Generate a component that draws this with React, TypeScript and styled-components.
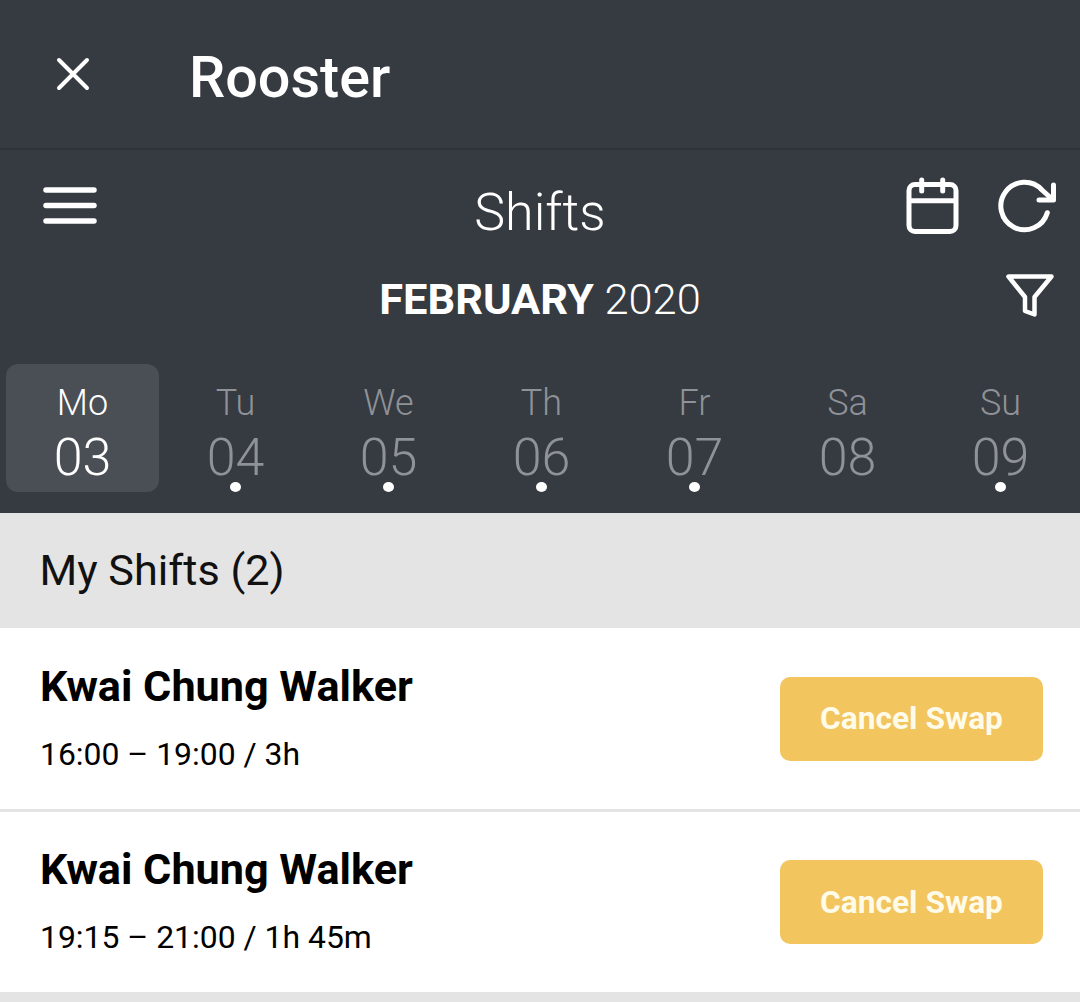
import { createGlobalStyle, styled } from "styled-components";

const GlobalStyle = createGlobalStyle`
  html, body {
    margin: 0;
    padding: 0;
    background: #e4e4e4;
    font-family: Roboto, "Liberation Sans", sans-serif;
  }
`;

const Page = styled.div`
  width: 1080px;
  height: 1002px;
  overflow: hidden;
  display: flex;
  flex-direction: column;
`;

const TopBar = styled.header`
  height: 148px;
  border-bottom: 2px solid #30343a;
  background: #363a41;
  display: flex;
  align-items: center;
  padding-left: 55px;
  gap: 98px;
`;

const Title = styled.h1`
  margin: 6px 0 0;
  font-size: 57.5px;
  font-weight: 500;
  color: #fff;
`;

const Panel = styled.section`
  height: 363px;
  box-sizing: border-box;
  padding-top: 27px;
  background: #363a41;
  color: #fff;
`;

const Toolbar = styled.div`
  height: 60px;
  padding: 0 24px;
  display: grid;
  grid-template-columns: 1fr auto 1fr;
`;

const MenuSlot = styled.div`
  padding-left: 19px;
`;

const ScreenName = styled.h2`
  margin: 0;
  font-size: 52px;
  line-height: 72px;
  font-weight: 300;
`;

const ToolbarActions = styled.div`
  display: flex;
  justify-content: flex-end;
  gap: 38px;
`;

const MonthRow = styled.div`
  height: 52px;
  margin-top: 36px;
  padding: 0 25px;
  display: grid;
  grid-template-columns: 1fr auto 1fr;
`;

const MonthLabel = styled.div`
  font-size: 43.4px;
  line-height: 54px;
  font-weight: 300;

  strong {
    font-weight: 700;
  }
`;

const FilterSlot = styled.div`
  display: flex;
  justify-content: flex-end;
`;

const Days = styled.div`
  margin-top: 39px;
  padding-left: 6px;
  display: grid;
  grid-template-columns: repeat(7, 153px);
`;

const Day = styled.div<{ $active?: boolean }>`
  position: relative;
  height: 128px;
  border-radius: 12px;
  background: ${(p) => (p.$active ? "#4a4e55" : "transparent")};
  color: ${(p) => (p.$active ? "#fff" : "#8f9297")};
  display: flex;
  flex-direction: column;
  align-items: center;
  font-weight: 300;
`;

const DayName = styled.span`
  margin-top: 17px;
  font-size: 36px;
  line-height: 44px;
`;

const DayNumber = styled.span`
  margin-top: 2px;
  font-size: 52px;
  line-height: 62px;
`;

const Dot = styled.span`
  position: absolute;
  left: 50%;
  top: 118px;
  width: 11px;
  height: 10px;
  margin-left: -5.5px;
  border-radius: 50%;
  background: #fff;
`;

const SectionHeader = styled.div`
  height: 115px;
  padding-left: 39.5px;
  display: flex;
  align-items: center;
  background: #e4e4e4;
  color: #111;
  font-size: 43.2px;
`;

const ShiftRow = styled.div<{ $height: number }>`
  height: ${(p) => p.$height}px;
  padding: 0 37px 0 40px;
  display: flex;
  justify-content: space-between;
  align-items: center;
  background: #fff;
`;

const ShiftInfo = styled.div`
  display: flex;
  flex-direction: column;
  gap: 23px;
  margin-bottom: 3px;
  color: #000;
`;

const ShiftName = styled.div`
  font-size: 43.2px;
  line-height: 50px;
  font-weight: 700;
`;

const ShiftTime = styled.div`
  font-size: 31.9px;
  line-height: 38px;
`;

const SwapButton = styled.button`
  width: 263px;
  height: 84px;
  border: none;
  border-radius: 10px;
  background: #f2c55f;
  color: #fffbe9;
  font-family: inherit;
  font-size: 31.7px;
  font-weight: 700;
`;

const Divider = styled.div`
  height: 3px;
  background: #e4e4e4;
`;

const CloseIcon = () => (
  <svg width="36" height="36" viewBox="0 0 36 36" fill="none" stroke="#fff" strokeWidth="4" strokeLinecap="round">
    <path d="M4 4 L32 32 M32 4 L4 32" />
  </svg>
);

const MenuIcon = () => (
  <svg width="54" height="50" viewBox="0 0 54 50" fill="none" stroke="#fff" strokeWidth="5.5" strokeLinecap="round">
    <path d="M3 13 H51 M3 28.5 H51 M3 44 H51" />
  </svg>
);

const CalendarIcon = () => (
  <svg width="54" height="58" viewBox="0 0 54 58" fill="none" stroke="#fff" strokeWidth="5" strokeLinecap="round">
    <rect x="3" y="7.5" width="47" height="47" rx="6" />
    <path d="M3 23.7 H50" strokeLinecap="butt" />
    <path d="M15.7 3 V14 M36.7 3 V14" />
  </svg>
);

const RefreshIcon = () => (
  <svg width="58" height="58" viewBox="0 0 58 58" fill="none" stroke="#fff" strokeWidth="5" strokeLinecap="round" strokeLinejoin="round">
    <path d="M49.3 35.7 A23.7 23.7 0 1 1 44 13 L54 22" />
    <path d="M55.5 8 V23 H41" />
  </svg>
);

const FilterIcon = () => (
  <svg width="50" height="46" viewBox="0 0 50 46" fill="none" stroke="#fff" strokeWidth="4.5" strokeLinejoin="round">
    <path d="M3.5 3.5 H46.5 L29.5 24 V41.5 L20 38 V24 Z" />
  </svg>
);

const days = [
  { name: "Mo", num: "03", active: true },
  { name: "Tu", num: "04", dot: true },
  { name: "We", num: "05", dot: true },
  { name: "Th", num: "06", dot: true },
  { name: "Fr", num: "07", dot: true },
  { name: "Sa", num: "08" },
  { name: "Su", num: "09", dot: true },
];

export default function App() {
  return (
    <Page>
      <GlobalStyle />
      <TopBar>
        <CloseIcon />
        <Title>Rooster</Title>
      </TopBar>
      <Panel>
        <Toolbar>
          <MenuSlot>
            <MenuIcon />
          </MenuSlot>
          <ScreenName>Shifts</ScreenName>
          <ToolbarActions>
            <CalendarIcon />
            <RefreshIcon />
          </ToolbarActions>
        </Toolbar>
        <MonthRow>
          <div />
          <MonthLabel>
            <strong>FEBRUARY</strong> 2020
          </MonthLabel>
          <FilterSlot>
            <FilterIcon />
          </FilterSlot>
        </MonthRow>
        <Days>
          {days.map((d) => (
            <Day key={d.num} $active={d.active}>
              <DayName>{d.name}</DayName>
              <DayNumber>{d.num}</DayNumber>
              {d.dot && <Dot />}
            </Day>
          ))}
        </Days>
      </Panel>
      <SectionHeader>My Shifts (2)</SectionHeader>
      <ShiftRow $height={181}>
        <ShiftInfo>
          <ShiftName>Kwai Chung Walker</ShiftName>
          <ShiftTime>16:00 – 19:00 / 3h</ShiftTime>
        </ShiftInfo>
        <SwapButton>Cancel Swap</SwapButton>
      </ShiftRow>
      <Divider />
      <ShiftRow $height={180}>
        <ShiftInfo>
          <ShiftName>Kwai Chung Walker</ShiftName>
          <ShiftTime>19:15 – 21:00 / 1h 45m</ShiftTime>
        </ShiftInfo>
        <SwapButton>Cancel Swap</SwapButton>
      </ShiftRow>
    </Page>
  );
}
